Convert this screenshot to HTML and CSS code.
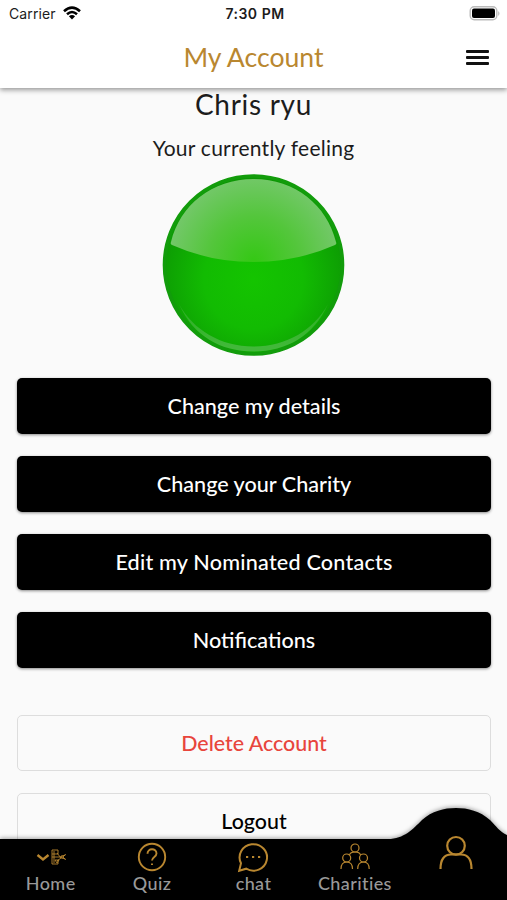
FILE: index.html
```html
<!DOCTYPE html>
<html lang="en">
<head>
    <meta charset="UTF-8">
    <meta name="viewport" content="width=device-width, initial-scale=1">
    <title>My Account</title>
    <link rel="stylesheet" href="styles.css">
</head>
<body>
    <div class="app">
        <header class="top">
            <div class="status-bar">
                <div class="carrier">
                    <span>Carrier</span>
                    <svg class="wifi" viewBox="0 0 20 16">
                        <path d="M2 6.2 Q10 -1 18 6.2" />
                        <path d="M5 9.2 Q10 4.8 15 9.2" />
                        <path class="dot" d="M6.9 11.3 Q10 8.8 13.1 11.3 L10 14.5 Z" />
                    </svg>
                </div>
                <span class="time">7:30 PM</span>
                <svg class="battery" viewBox="0 0 32 16">
                    <rect x="1.2" y="0.7" width="26.6" height="13" rx="4" fill="#fff" stroke="#bbb" stroke-width="1.4" />
                    <rect x="3" y="2.500" width="23" height="9.4" rx="2" fill="#000" />
                    <path d="M29.2 5 Q31.8 7.500 29.2 10 Z" fill="#bbb" />
                </svg>
            </div>
            <div class="title-bar">
                <h1>My Account</h1>
                <button class="menu" aria-label="Menu"><i></i><i></i><i></i></button>
            </div>
        </header>

        <main class="content">
            <h2>Chris ryu</h2>
            <p class="feeling">Your currently feeling</p>
            <svg class="mood" viewBox="0 0 182 182">
                <defs>
                    <radialGradient id="ball" cx="50%" cy="58%" r="62%">
                        <stop offset="0" stop-color="#14c400" />
                        <stop offset="0.45" stop-color="#12bb02" />
                        <stop offset="1" stop-color="#0b9004" />
                    </radialGradient>
                    <radialGradient id="gloss" gradientUnits="userSpaceOnUse" cx="91" cy="88" r="92">
                        <stop offset="0" stop-color="#34c814" />
                        <stop offset="0.5" stop-color="#54c63c" />
                        <stop offset="1" stop-color="#78c870" />
                    </radialGradient>
                    <linearGradient id="rim" x1="0" y1="0" x2="0" y2="1">
                        <stop offset="0" stop-color="#3db434" stop-opacity="0.6" />
                        <stop offset="0.9" stop-color="#42b83a" />
                    </linearGradient>
                </defs>
                <circle cx="90.500" cy="91" r="89" fill="url(#ball)" stroke="#129c0b" stroke-width="3.600" />
                <path d="M8 68 C17 31 49 5 90.500 5 C132 5 164 31 173 68 Q174 70 172 71 Q134 88 90.500 88 Q47 88 9 71 Q7 70 8 68 Z" fill="url(#gloss)" />
                <path d="M16 130 C30 162 58 177.500 90.500 177.500 C123 177.500 151 162 165 130 C151 156 123 172.500 90.500 172.500 C58 172.500 30 156 16 130 Z" fill="url(#rim)" />
            </svg>
            <div class="actions">
                <button class="btn dark">Change my details</button>
                <button class="btn dark">Change your Charity</button>
                <button class="btn dark wide">Edit my Nominated Contacts</button>
                <button class="btn dark">Notifications</button>
            </div>
            <div class="actions session">
                <button class="btn delete">Delete Account</button>
                <button class="btn">Logout</button>
            </div>
        </main>

        <nav class="tabs">
            <svg class="tabs-bg" viewBox="0 0 507 93">
                <path d="M0 32 H388 C404 32 413 22 422 13 C432 4 444 1 456 1 C468 1 480 4 490 13 C496 19 500 25 507 28 V93 H0 Z" />
            </svg>
            <a class="tab">
                <svg viewBox="0 0 32 32">
                    <path d="M2.500 14 L8 18.500 L13.500 14" stroke-width="2.400" />
                    <path d="M17 9 H23 V13 H17 Z M17 13 V23 H23 V19 M17 16 H25 M19 10 V22 M20 19 H24 L22 22 Z M22 12 L26 17 L22 20 M25 16 L31 13.500 M25 16 L31 18.500 M27 14 V18 M30 14 L28 16 L30 18" stroke-width="0.9" />
                </svg>
                <span>Home</span>
            </a>
            <a class="tab">
                <svg viewBox="0 0 32 32">
                    <circle cx="16" cy="16" r="13.200" />
                    <path d="M11.500 12.800 C11.500 6.800 20.500 6.800 20.500 12.500 C20.500 16 16 15.800 16 19.500 M16 22.500 V24" />
                </svg>
                <span>Quiz</span>
            </a>
            <a class="tab">
                <svg viewBox="0 0 32 32">
                    <path d="M2.200 29.800 L4 22.200 A13.700 13.200 0 1 1 9.200 27.700 Z" stroke-width="2" />
                    <path d="M9 16 H11.200 M15 16 H17.200 M21 16 H23.200" stroke-width="2.200" />
                </svg>
                <span>chat</span>
            </a>
            <a class="tab">
                <svg viewBox="0 0 32 32">
                    <g stroke-width="1.200">
                        <circle cx="16" cy="7" r="4" />
                        <circle cx="7.700" cy="17" r="4" />
                        <circle cx="24.500" cy="17" r="4" />
                        <path d="M10.500 14 C11 11.500 13 11 16 11 C19 11 21 11.500 21.500 14 M2 28 C2 23 4 21 7.700 21 C11.500 21 13.500 23 13.500 28 M18.700 28 C18.700 23 20.500 21 24.500 21 C28 21 30.200 23 30.200 28" />
                    </g>
                </svg>
                <span>Charities</span>
            </a>
            <a class="tab active">
                <svg viewBox="0 0 36 36">
                    <circle cx="18" cy="10.800" r="8.800" />
                    <path d="M2.500 34 C2.500 24.500 6.500 19.500 13 19.500 H23 C29.500 19.500 33.500 24.500 33.500 34" />
                </svg>
            </a>
        </nav>
    </div>
</body>
</html>
```
FILE: styles.css
```css
* {
    box-sizing: border-box;
}

body {
    margin: 0;
    font-family: Lato, sans-serif;
    background-color: #fafafa;
    color: #1c1c1c;
}

.app {
    display: flex;
    flex-direction: column;
    height: 900px;
    overflow: hidden;
}

.top {
    position: relative;
    z-index: 1;
    flex: none;
    height: 88px;
    background: #fff;
    box-shadow: 0 2px 5px rgba(0,0,0,0.4);
}

.status-bar {
    display: grid;
    grid-template-columns: 1fr auto 1fr;
    align-items: center;
    height: 27px;
    padding: 0 6px 0 9px;
    font-family: Inter, sans-serif;
    font-size: 14px;
    letter-spacing: 0.1px;
}

.carrier {
    display: flex;
    align-items: center;
    gap: 6px;
}

.wifi {
    width: 20px;
    height: 16px;
    margin-top: -2px;
    fill: none;
    stroke: #000;
    stroke-width: 2.6;
}

.wifi .dot {
    fill: #000;
    stroke: none;
}

.time {
    font-weight: 600;
    letter-spacing: 0.5px;
}

.battery {
    width: 32px;
    height: 16px;
    justify-self: end;
}

.title-bar {
    display: grid;
    grid-template-columns: 1fr auto 1fr;
    align-items: center;
    height: 60px;
    padding: 0 18px;
}

h1 {
    grid-column: 2;
    margin: 0;
    font-size: 26.6px;
    font-weight: 400;
    line-height: 32px;
    color: #b98730;
}

.menu {
    display: flex;
    flex-direction: column;
    justify-self: end;
    gap: 3px;
    padding: 0;
    border: none;
    background: none;
}

.menu i {
    width: 23px;
    height: 3px;
    border-radius: 1px;
    background: #111;
}

.content {
    display: flex;
    flex-direction: column;
    align-items: center;
    flex: 1;
    min-height: 0;
    padding: 0 16px;
}

h2 {
    margin: 0;
    font-size: 28px;
    font-weight: 400;
    letter-spacing: 0.7px;
    line-height: 32px;
}

.feeling {
    margin: 15px 0 14px;
    font-size: 21px;
    letter-spacing: 0.25px;
    line-height: 25px;
}

.mood {
    flex: none;
    width: 182px;
    height: 182px;
    overflow: visible;
}

.actions {
    display: flex;
    flex-direction: column;
    flex: none;
    align-self: stretch;
    gap: 22px;
    margin: 22px 0 0 1px;
}

.session {
    margin-top: 47px;
}

.btn {
    height: 56px;
    padding: 0;
    border: 1px solid #ddd;
    border-radius: 5px;
    background: transparent;
    font-family: inherit;
    font-size: 21.4px;
    font-weight: 500;
    color: #000;
}

.dark {
    border: none;
    background: #000;
    font-size: 21.6px;
    color: #fff;
    box-shadow: 0 1px 3px rgba(0,0,0,0.45);
}

.wide {
    letter-spacing: 0.2px;
}

.session .btn {
    padding-bottom: 1px;
}

.session .delete {
    color: #e8453c;
}

.tabs {
    position: relative;
    z-index: 1;
    display: grid;
    grid-template-columns: repeat(5, 1fr);
    flex: none;
    height: 61px;
}

/* black bar with the bump behind the active tab */
.tabs-bg {
    position: absolute;
    left: 0;
    bottom: 0;
    width: 507px;
    height: 93px;
    overflow: visible;
    filter: drop-shadow(0 -1px 2px rgba(0,0,0,0.35));
}

.tab {
    position: relative;
    display: flex;
    flex-direction: column;
    align-items: center;
    padding-top: 2px;
    font-size: 18px;
    font-weight: 500;
    letter-spacing: 0.4px;
    line-height: 21px;
    color: #999;
}

.tab svg {
    width: 32px;
    height: 32px;
    fill: none;
    stroke: #b98730;
    stroke-width: 1.900;
}

.active svg {
    width: 36px;
    height: 36px;
    margin-top: -6px;
    stroke-width: 2.200;
}
```
